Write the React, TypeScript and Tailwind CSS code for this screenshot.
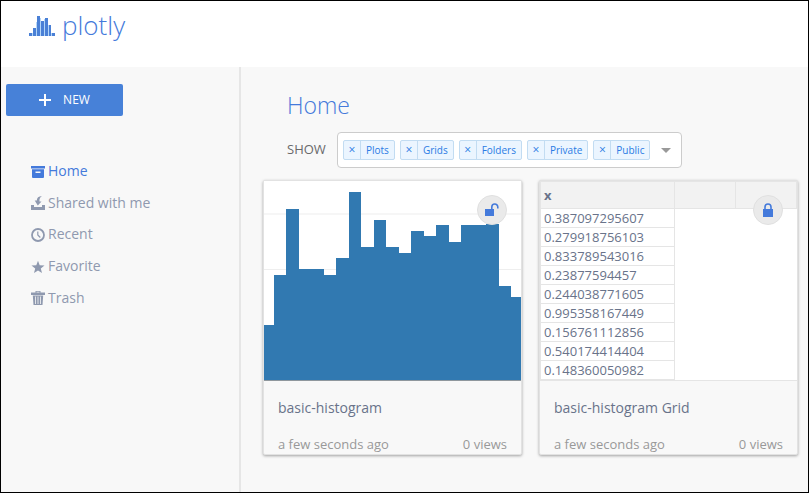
import React from "react";

type IconProps = { className?: string };

function PlotlyMark() {
  return (
    <svg className="mt-0.5" width="26" height="20" viewBox="0 0 26 20" fill="#4a80d6" aria-hidden="true">
      <path d="M3 17h1v-5h3V6h1V2h4v3h3V3h4v6h3v8h1v3H3z" fill="#b4d6f8" />
      <rect x="0" y="17" width="3" height="3" />
      <rect x="4" y="12" width="3" height="8" />
      <rect x="8" y="0" width="3" height="20" />
      <rect x="12" y="5" width="3" height="15" />
      <rect x="16" y="2" width="3" height="18" />
      <rect x="20" y="9" width="2" height="11" />
      <rect x="23" y="17" width="3" height="3" />
    </svg>
  );
}

function ArchiveIcon({ className }: IconProps) {
  return (
    <svg className={className} viewBox="0 0 14 14" fill="currentColor" aria-hidden="true">
      <path d="M0 1h14v2.500H0z" />
      <path fillRule="evenodd" d="M1 4.300h12v7.700q0 1-1 1H2q-1 0-1-1zM4.500 6.500v1.500h5V6.500z" />
    </svg>
  );
}

function InboxIcon({ className }: IconProps) {
  return (
    <svg className={className} viewBox="0 0 14 14" fill="currentColor" aria-hidden="true">
      <path d="M0 9h3v2h8V9h3v5H0z" />
      <path d="M11 0C7.500.2 5.800 1.800 5.800 4.500H3.700L6.800 9.500 10.500 5.500H8.500C8.200 3.200 9 1.200 11 0z" />
    </svg>
  );
}

function ClockIcon({ className }: IconProps) {
  return (
    <svg className={className} viewBox="0 0 14 14" fill="none" stroke="currentColor" aria-hidden="true">
      <circle cx="7" cy="7" r="6" strokeWidth="1.800" />
      <path d="M6.800 3.500V7L9.300 9.500" strokeWidth="1.200" />
    </svg>
  );
}

function StarIcon({ className }: IconProps) {
  return (
    <svg className={className} viewBox="0 0 14 14" fill="currentColor" aria-hidden="true">
      <path d="M7 .8l1.700 4.400 4.800.2-3.700 3 1.200 4.700L7 10.500l-4 2.600 1.200-4.700-3.700-3 4.800-.2z" />
    </svg>
  );
}

function TrashIcon({ className }: IconProps) {
  return (
    <svg className={className} viewBox="0 0 14 14" fill="currentColor" aria-hidden="true">
      <path fillRule="evenodd" d="M4.500 0h5v1.500H14V4H0V1.500h4.500zM5.500.8v.7h3V.8z" />
      <path fillRule="evenodd" d="M1.800 4.500h10.400L11.500 14h-9zM4 5.500V13h.8V5.500zM6.600 5.500V13h.8V5.500zM9.200 5.500V13h.8V5.500z" />
    </svg>
  );
}

function UnlockIcon() {
  return (
    <svg width="14" height="14" viewBox="0 0 14 14" aria-hidden="true">
      <rect x="0" y="6" width="9" height="7" fill="#447adb" />
      <path d="M6.800 6V4a3 3 0 0 1 6 0v1.500" fill="none" stroke="#447adb" strokeWidth="1.600" />
    </svg>
  );
}

function LockIcon() {
  return (
    <svg width="14" height="14" viewBox="0 0 14 14" aria-hidden="true">
      <rect x="2" y="6" width="10" height="8" fill="#447adb" />
      <path d="M4 6.500V4a3 3 0 0 1 6 0v2.500" fill="none" stroke="#447adb" strokeWidth="1.600" />
    </svg>
  );
}

const navItems = [
  { label: "Home", Icon: ArchiveIcon, active: true },
  { label: "Shared with me", Icon: InboxIcon, active: false },
  { label: "Recent", Icon: ClockIcon, active: false },
  { label: "Favorite", Icon: StarIcon, active: false },
  { label: "Trash", Icon: TrashIcon, active: false },
];

const filters = ["Plots", "Grids", "Folders", "Private", "Public"];

const gridValues = [
  "0.387097295607",
  "0.279918756103",
  "0.833789543016",
  "0.23877594457",
  "0.244038771605",
  "0.995358167449",
  "0.156761112856",
  "0.540174414404",
  "0.148360050982",
];

// [left edge, right edge, top] of each bin
const bins = [
  [0, 10, 144],
  [10, 22, 94],
  [22, 35, 28],
  [35, 60, 88],
  [60, 72, 94],
  [72, 85, 77],
  [85, 97, 11],
  [97, 110, 66],
  [110, 122, 39],
  [122, 135, 66],
  [135, 147, 72],
  [147, 160, 50],
  [160, 172, 55],
  [172, 185, 44],
  [185, 197, 61],
  [197, 222, 44],
  [222, 235, 43],
  [235, 247, 105],
  [247, 257, 116],
];

function Histogram() {
  return (
    <svg
      className="block h-full w-full"
      viewBox="0 0 257 200"
      preserveAspectRatio="none"
      shapeRendering="crispEdges"
      role="img"
      aria-label="Histogram"
    >
      <rect x="0" y="32" width="257" height="2" fill="#f6f6f6" />
      <rect x="0" y="88" width="257" height="1" fill="#eeeeee" />
      {bins.map(([left, right, top]) => (
        <rect key={left} x={left} y={top} width={right - left} height={199 - top} fill="#3179b1" />
      ))}
      <rect x="0" y="199" width="257" height="1" fill="#8f979d" />
    </svg>
  );
}

function GridPreview() {
  return (
    <div className="h-full border-b border-[#e5e5e5]">
      <table className="w-full table-fixed border-collapse text-left text-[13px] leading-[18px] text-[#69738a]">
        <colgroup>
          <col className="w-[134px]" />
          <col className="w-[61px]" />
          <col />
        </colgroup>
        <thead>
          <tr className="h-[27px] bg-[#f2f2f2]">
            <th className="border border-[#e5e5e5] px-[3px] font-bold">x</th>
            <th className="border border-[#e5e5e5]" />
            <th className="border border-[#e5e5e5]" />
          </tr>
        </thead>
        <tbody>
          {gridValues.map((value) => (
            <tr key={value}>
              <td className="border border-[#e5e5e5] px-[3px] py-0">{value}</td>
            </tr>
          ))}
        </tbody>
      </table>
    </div>
  );
}

type CardProps = {
  title: string;
  badge: React.ReactNode;
  badgeLabel: string;
  children: React.ReactNode;
};

function FileCard({ title, badge, badgeLabel, children }: CardProps) {
  return (
    <article className="relative rounded-xs border border-[#e2e2e2] bg-[#f8f8f8] shadow-[0_1px_3px_rgba(0,0,0,0.35)]">
      <div className="h-[200px] overflow-hidden bg-white">{children}</div>
      <button
        aria-label={badgeLabel}
        className="absolute top-3.5 right-3.5 flex size-[30px] items-center justify-center rounded-full border border-[#e0e0e0] bg-[#eaeaea]"
      >
        {badge}
      </button>
      <div className="px-3.5 pt-[17px]">
        <h2 className="text-[14px] leading-5 text-[#69738a]">{title}</h2>
        <div className="mt-4 flex justify-between text-[13px] leading-5 text-[#999999]">
          <span>a few seconds ago</span>
          <span>0 views</span>
        </div>
      </div>
    </article>
  );
}

export default function App() {
  return (
    <div className="flex min-h-screen flex-col border border-black bg-[#f8f8f8] font-['Open_Sans',sans-serif]">
      <header className="h-[66px] bg-white px-7 pt-2">
        <a href="#" className="flex items-center gap-[7px] text-[#447adb]">
          <PlotlyMark />
          <span className="text-[26px] leading-8 font-light">plotly</span>
        </a>
      </header>

      <div className="flex flex-1">
        <aside className="w-60 shrink-0 border-r-2 border-[#e6e6e6] pt-[17px]">
          <button className="ml-[5px] flex h-8 w-[117px] items-center justify-center gap-3 rounded-xs bg-[#4781d8] text-[12px] font-medium text-white">
            <svg width="12" height="12" viewBox="0 0 12 12" fill="currentColor" aria-hidden="true">
              <path d="M5 0h2v5h5v2H7v5H5V7H0V5h5z" />
            </svg>
            NEW
          </button>
          <nav className="mt-[39px] grid h-[158px] grid-rows-5 pl-[30px] text-[14px]">
            {navItems.map(({ label, Icon, active }) => (
              <a
                key={label}
                href="#"
                className={`flex items-center gap-[3px] ${active ? "text-[#447adb]" : "text-[#8f99af]"}`}
              >
                <Icon className="mt-0.5 size-3.5" />
                {label}
              </a>
            ))}
          </nav>
        </aside>

        <main className="min-w-0 flex-1 pt-[22px] pr-2.5 pl-[22px]">
          <h1 className="pl-6 text-[23px] leading-8 font-light text-[#447adb]">Home</h1>
          <div className="mt-[11px] flex items-center pl-6 text-[13px] text-[#69696b]">
            <span className="w-[50px]">SHOW</span>
            <div className="flex h-9 items-center gap-[5px] rounded-sm border border-[#cccccc] bg-white pr-2.5 pl-[5px]">
              {filters.map((name) => (
                <span
                  key={name}
                  className="flex h-5 items-stretch rounded-xs border border-[#c2dcf2] bg-[#ebf5ff] text-[10px] leading-[18px] text-[#2a7be4]"
                >
                  <button
                    aria-label={`Remove ${name}`}
                    className="w-[17px] border-r border-[#c2dcf2] pb-0.5 text-[12px]"
                  >
                    ×
                  </button>
                  <span className="px-[5px]">{name}</span>
                </span>
              ))}
              <button aria-label="Open filter list" className="ml-1.5">
                <svg width="10" height="5" viewBox="0 0 10 5" fill="#999999" aria-hidden="true">
                  <path d="M0 0h10L5 5z" />
                </svg>
              </button>
            </div>
          </div>

          <div className="mt-3 grid grid-cols-2 gap-[17px]">
            <FileCard title="basic-histogram" badge={<UnlockIcon />} badgeLabel="Public file">
              <Histogram />
            </FileCard>
            <FileCard title="basic-histogram Grid" badge={<LockIcon />} badgeLabel="Private file">
              <GridPreview />
            </FileCard>
          </div>
        </main>
      </div>
    </div>
  );
}
